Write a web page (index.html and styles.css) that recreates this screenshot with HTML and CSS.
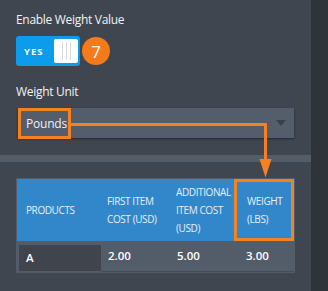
FILE: index.html
```html
<!DOCTYPE html>
<html lang="en">
<head>
    <meta charset="UTF-8">
    <meta name="viewport" content="width=device-width, initial-scale=1.0">
    <title>Weight Value</title>
    <link rel="stylesheet" href="styles.css">
</head>
<body>
    <div class="panel">
        <div class="field">
            <div class="label">Enable Weight Value</div>
            <div class="toggle-row">
                <div class="toggle">
                    <span class="toggle-text">YES</span>
                    <span class="knob">
                        <svg width="24" height="24" viewBox="0 0 24 24">
                            <path d="M8.5 3v18M12.5 3v18M16.5 3v18" stroke="#d6d9dd" stroke-width="1"/>
                        </svg>
                    </span>
                </div>
                <span class="badge">7</span>
            </div>
        </div>

        <div class="field unit-field">
            <div class="label">Weight Unit</div>
            <div class="select">
                <span class="select-value">Pounds</span>
                <span class="caret"></span>
            </div>
        </div>

        <div class="divider"></div>

        <!-- weight table -->
        <table class="grid">
            <colgroup>
                <col class="col-product">
                <col class="col-first">
                <col class="col-add">
                <col class="col-weight">
            </colgroup>
            <thead>
                <tr>
                    <th class="th-product">PRODUCTS</th>
                    <th>FIRST ITEM COST (USD)</th>
                    <th>ADDITIONAL ITEM COST (USD)</th>
                    <th class="th-weight"><div class="weight-box">WEIGHT (LBS)</div></th>
                </tr>
            </thead>
            <tbody>
                <tr>
                    <td><div class="cell-input">A</div></td>
                    <td><div class="cell-value">2.00</div></td>
                    <td><div class="cell-value">5.00</div></td>
                    <td><div class="cell-value weight-value">3.00</div></td>
                </tr>
            </tbody>
        </table>

        <!-- annotation arrow from the unit to the weight column -->
        <svg class="connector" width="311" height="291" viewBox="0 0 311 291">
            <path d="M71 124.5H265.5V162" fill="none" stroke="#f58220" stroke-width="3"/>
            <polygon points="259.5,159 271.5,159 265.5,177.5" fill="#f58220"/>
        </svg>
    </div>
    <div class="scrollbar"></div>
</body>
</html>
```

FILE: styles.css
```css
body {
    margin: 0;
    display: flex;
    height: 291px;
    overflow: hidden;
    background: #2f343b;
    font-family: "Open Sans", "Noto Sans", sans-serif;
    color: #eef0f2;
}
.panel {
    position: relative;
    width: 311px;
    height: 291px;
    background: #3f4650;
    padding-top: 11px;
    box-sizing: border-box;
}
.scrollbar {
    flex: 1;
    background: #2f343b;
}
.field {
    padding: 0 17px 0 16px;
}
.label {
    font-size: 12px;
    letter-spacing: -0.3px;
    line-height: 18px;
    color: #f1f3f5;
}
.toggle-row {
    display: flex;
    align-items: center;
    gap: 2px;
    margin-top: 7px;
}
.toggle {
    display: flex;
    align-items: center;
    justify-content: space-between;
    width: 64px;
    height: 30px;
    box-sizing: border-box;
    padding: 0 2px 0 8px;
    background: #0d9bec;
    border-radius: 3px;
}
.toggle-text {
    font-size: 9.5px;
    font-weight: 700;
    letter-spacing: 1px;
    color: #ffffff;
}
.knob {
    display: block;
    width: 24px;
    height: 24px;
    background: #ffffff;
    border-radius: 2px;
}
.knob svg {
    display: block;
}
.badge {
    display: flex;
    align-items: center;
    justify-content: center;
    width: 28px;
    height: 28px;
    border-radius: 50%;
    background: #f47a1c;
    color: #ffffff;
    font-size: 17px;
}
.unit-field {
    margin-top: 17px;
}
.unit-field .label {
    margin-bottom: 7px;
}
.select {
    display: flex;
    align-items: center;
    justify-content: space-between;
    margin-left: 2px;
    height: 30px;
    background: #535d6b;
    box-shadow: 0 1px 2px rgba(0, 0, 0, 0.45);
}
.select-value {
    box-sizing: border-box;
    height: 31px;
    width: 53px;
    border: 3px solid #f58220;
    padding-left: 5px;
    font-size: 12px;
    letter-spacing: -0.2px;
    line-height: 25px;
    color: #eef0f2;
}
.caret {
    width: 0;
    height: 0;
    margin-right: 8px;
    border-left: 5px solid transparent;
    border-right: 5px solid transparent;
    border-top: 6px solid #3a4048;
}
.divider {
    height: 7px;
    margin-top: 17px;
    background: #535c69;
}
.grid {
    margin: 16px 0 0 16px;
    border-collapse: separate;
    border-spacing: 0;
    border: 1px solid #535c69;
    width: 279px;
    table-layout: fixed;
}
.col-product { width: 84px; }
.col-first { width: 69px; }
.col-add { width: 64px; }
.col-weight { width: 60px; }
.grid th {
    height: 62px;
    padding: 0 4px 0 6px;
    background: #3187ca;
    font-size: 10px;
    letter-spacing: -0.4px;
    font-weight: 400;
    line-height: 18px;
    text-align: left;
    color: #e8eef6;
}
.grid th.th-product {
    padding-left: 9px;
}
.grid th.th-weight {
    padding: 0;
}
.weight-box {
    box-sizing: border-box;
    height: 62px;
    padding: 0 8px 0 10px;
    border: 3px solid #f58220;
    display: flex;
    align-items: center;
}
.grid td {
    height: 31px;
    padding: 0;
    background: #535c69;
    font-size: 11.5px;
    font-weight: 600;
    color: #ffffff;
}
.cell-input {
    margin: 4px 0 1px 2px;
    height: 26px;
    line-height: 26px;
    padding-left: 7px;
    background: #3f444d;
}
.cell-value {
    height: 30px;
    line-height: 29px;
    padding-left: 7px;
    border-bottom: 1px solid #454c56;
}
.weight-value {
    padding-left: 12px;
}
.connector {
    position: absolute;
    top: 0;
    left: 0;
    pointer-events: none;
}
```
